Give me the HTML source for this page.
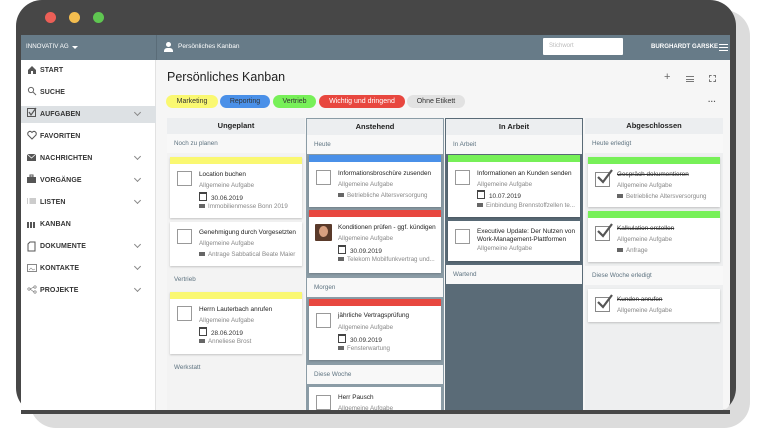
<!DOCTYPE html>
<html><head><meta charset="utf-8"><style>
*{margin:0;padding:0;box-sizing:border-box}
body{width:766px;height:430px;overflow:hidden;background:#fff;font-family:"Liberation Sans",sans-serif;position:relative}
.a{position:absolute}
.t{position:absolute;white-space:nowrap}
.nav{position:absolute;left:40px;font-size:7px;font-weight:bold;color:#333;letter-spacing:.1px;margin-top:1px}
.chev{position:absolute;left:135px;width:5px;height:5px;border-right:1px solid #888;border-bottom:1px solid #888;transform:rotate(45deg)}
.tag{position:absolute;top:95px;height:13px;border-radius:7px;font-size:7px;line-height:13px;text-align:center;color:#333}
.col{position:absolute;top:118px;width:138px;height:292px}
.hd{position:absolute;left:0;top:0;width:100%;height:16px;background:#eceef0;font-size:7.5px;font-weight:bold;text-align:center;line-height:16px;color:#222}
.sub{position:absolute;width:138px;height:19px;background:#f8f8f8;font-size:6.3px;color:#5e7380;line-height:19px;padding-left:7px}
.card{position:absolute;width:132px;background:#fff;box-shadow:0 1px 2px rgba(0,0,0,.2);overflow:hidden}
.bar{position:absolute;left:0;top:0;width:100%;height:7px}
.cb{position:absolute;left:7px;width:15px;height:15px;border:1px solid #999;background:#fff}
.ti{position:absolute;left:29px;font-size:6.4px;color:#222;white-space:nowrap}
.s1{position:absolute;left:29px;font-size:6.2px;color:#888;white-space:nowrap}
.dt{position:absolute;left:29px;font-size:6.4px;color:#333;white-space:nowrap}
.dt:before{content:"";display:inline-block;width:6px;height:6px;border:1px solid #444;border-top-width:2px;margin-right:4px;vertical-align:-1px}
.pr{position:absolute;left:29px;font-size:6.2px;color:#888;white-space:nowrap}
.pr:before{content:"";display:inline-block;width:6px;height:4px;background:#666;margin-right:3px;vertical-align:0}
.chk{position:absolute;left:7px;width:15px;height:15px;border:1px solid #888}
.chk svg{position:absolute;left:1px;top:-4px}
.st{text-decoration:line-through;color:#333}
</style></head><body>
<div class="a" style="left:30px;top:10px;width:720px;height:418px;background:#dcdcdc;border-radius:26px"></div>
<div class="a" style="left:16px;top:0;width:720px;height:414px;background:#474747;border-radius:26px"></div>
<div class="a" style="left:45px;top:12px;width:11px;height:11px;border-radius:50%;background:#ec5f57"></div>
<div class="a" style="left:69px;top:12px;width:11px;height:11px;border-radius:50%;background:#f4bd4f"></div>
<div class="a" style="left:93px;top:12px;width:11px;height:11px;border-radius:50%;background:#5fc651"></div>
<div class="a" style="left:21px;top:35px;width:709px;height:375px;background:#f6f6f6;border-radius:0 0 8px 8px;overflow:hidden"></div>
<div class="a" style="left:21px;top:35px;width:709px;height:25px;background:#677b88"></div>
<div class="t" style="left:26px;top:43px;font-size:6.2px;color:#fff">INNOVATIV AG</div>
<div class="a" style="left:72px;top:46px;border-left:3px solid transparent;border-right:3px solid transparent;border-top:3px solid #fff"></div>
<div class="a" style="left:156px;top:35px;width:1px;height:25px;background:#5a6c78"></div>
<div class="a" style="left:166px;top:42px;width:5px;height:5px;border-radius:50%;background:#fff"></div>
<div class="a" style="left:164px;top:48px;width:9px;height:4px;border-radius:3px 3px 0 0;background:#fff"></div>
<div class="t" style="left:178px;top:43px;font-size:6.5px;color:#fff">Persönliches Kanban</div>
<div class="a" style="left:543px;top:38px;width:80px;height:17px;background:#fff;border-radius:1px"></div>
<div class="t" style="left:549px;top:43px;font-size:6px;color:#bbb">Stichwort</div>
<div class="t" style="left:651px;top:43px;font-size:6.1px;color:#fff;font-weight:bold">BURGHARDT GARSKE</div>
<div class="a" style="left:719px;top:44px;width:9px;height:7px;border-top:1px solid #fff;border-bottom:1px solid #fff"></div>
<div class="a" style="left:719px;top:47px;width:9px;height:1px;background:#fff"></div>
<div class="a" style="left:21px;top:60px;width:135px;height:350px;background:#fff;border-right:1px solid #e2e2e2;border-radius:0 0 0 8px"></div>
<div class="a" style="left:21px;top:106px;width:135px;height:17px;background:#dde1e4"></div>
<svg class="a" style="left:27px;top:65px" width="10" height="140" viewBox="0 0 10 140">
<path d="M1 5 L5 1 L9 5 V9 H6 V6 H4 V9 H1Z" fill="#555"/>
<circle cx="4" cy="25" r="2.6" fill="none" stroke="#666" stroke-width="1"/><path d="M6 27 L9 30" stroke="#666"/>
<rect x="0.5" y="43.5" width="8" height="8" fill="none" stroke="#555"/><path d="M2 47 L4 50 L9 43" fill="none" stroke="#555" stroke-width="1.2"/>
<path d="M5 74 L1 70 C0 67 3 65 5 67.5 C7 65 10 67 9 70Z" fill="none" stroke="#555"/>
<rect x="0" y="89" width="9" height="7" fill="#555"/><path d="M0 89 L4.5 93 L9 89" stroke="#fff" fill="none" stroke-width=".8"/>
<rect x="0" y="112" width="9" height="6" fill="#555"/><rect x="3" y="110" width="3" height="2" fill="none" stroke="#555"/>
<path d="M0 134h1M0 136h1M0 138h1M2.5 134h6.5M2.5 136h6.5M2.5 138h6.5" stroke="#777" stroke-width=".8"/>
</svg>
<svg class="a" style="left:27px;top:219px" width="10" height="80" viewBox="0 0 10 80">
<path d="M0 3h2v6H0zM3 3h2v6H3zM6 3h2v6H6z" fill="#555"/>
<path d="M1 32 V25 L3 23 H8 V32Z" fill="none" stroke="#555"/>
<rect x="0.5" y="45.5" width="9" height="7" fill="none" stroke="#888"/><path d="M2 51 L4 49 L6 51 L8 50" stroke="#888" fill="none" stroke-width=".6"/>
<circle cx="2" cy="70" r="1.2" fill="none" stroke="#777" stroke-width=".7"/><circle cx="8" cy="68" r="1.2" fill="none" stroke="#777" stroke-width=".7"/><circle cx="8" cy="73" r="1.2" fill="none" stroke="#777" stroke-width=".7"/><path d="M3 70 L7 68 M3 70 L7 73" stroke="#777" stroke-width=".6"/>
</svg>
<div class="nav" style="top:66px">START</div>
<div class="nav" style="top:88px">SUCHE</div>
<div class="nav" style="top:110px">AUFGABEN</div><div class="chev" style="top:110px"></div>
<div class="nav" style="top:132px">FAVORITEN</div>
<div class="nav" style="top:154px">NACHRICHTEN</div><div class="chev" style="top:154px"></div>
<div class="nav" style="top:176px">VORGÄNGE</div><div class="chev" style="top:176px"></div>
<div class="nav" style="top:198px">LISTEN</div><div class="chev" style="top:198px"></div>
<div class="nav" style="top:220px">KANBAN</div>
<div class="nav" style="top:242px">DOKUMENTE</div><div class="chev" style="top:242px"></div>
<div class="nav" style="top:264px">KONTAKTE</div><div class="chev" style="top:264px"></div>
<div class="nav" style="top:286px">PROJEKTE</div><div class="chev" style="top:286px"></div>
<div class="t" style="left:167px;top:70px;font-size:12.5px;color:#222">Persönliches Kanban</div>
<div class="t" style="left:664px;top:71px;font-size:11px;color:#666">+</div>
<div class="a" style="left:686px;top:76px;width:8px;height:6px;border-top:1px solid #777;border-bottom:1px solid #777"></div>
<div class="a" style="left:686px;top:78.5px;width:8px;height:1px;background:#777"></div>
<div class="a" style="left:709px;top:75px;width:7px;height:7px;border:1px dashed #777"></div>
<div class="t" style="left:708px;top:97px;font-size:8px;color:#555;font-weight:bold">···</div>
<div class="tag" style="left:166px;width:52px;background:#faf871">Marketing</div>
<div class="tag" style="left:220px;width:50px;background:#4a90e8">Reporting</div>
<div class="tag" style="left:273px;width:43px;background:#77f058">Vertrieb</div>
<div class="tag" style="left:319px;width:86px;background:#e8473f;color:#fff">Wichtig und dringend</div>
<div class="tag" style="left:407px;width:58px;background:#e2e2e2">Ohne Etikett</div>

<div class="col" style="left:167px;background:#f3f3f3">
<div class="hd">Ungeplant</div>
<div class="sub" style="top:16px;left:0">Noch zu planen</div>
<div class="sub" style="top:152px;left:0;background:none">Vertrieb</div>
<div class="sub" style="top:240px;left:0;background:none">Werkstatt</div>
</div>
<div class="card" style="left:170px;top:157px;height:61px"><div class="bar" style="background:#faf871"></div>
<div class="cb" style="top:14px"></div><div class="ti" style="top:14px">Location buchen</div><div class="s1" style="top:25px">Allgemeine Aufgabe</div><div class="dt" style="top:35px">30.06.2019</div><div class="pr" style="top:46px">Immobilienmesse Bonn 2019</div></div>
<div class="card" style="left:170px;top:222px;height:44px">
<div class="cb" style="top:7px"></div><div class="ti" style="top:7px">Genehmigung durch Vorgesetzten</div><div class="s1" style="top:18px">Allgemeine Aufgabe</div><div class="pr" style="top:29px">Antrage Sabbatical Beate Maier</div></div>
<div class="card" style="left:170px;top:292px;height:62px"><div class="bar" style="background:#faf871"></div>
<div class="cb" style="top:14px"></div><div class="ti" style="top:14px">Herrn Lauterbach anrufen</div><div class="s1" style="top:25px">Allgemeine Aufgabe</div><div class="dt" style="top:35px">28.06.2019</div><div class="pr" style="top:46px">Anneliese Brost</div></div>

<div class="col" style="left:306px;background:#8b9ca6;border:1px solid #8b9ca6">
<div class="hd">Anstehend</div>
<div class="sub" style="top:16px;left:0;width:136px">Heute</div>
<div class="sub" style="top:159px;left:0;width:136px">Morgen</div>
<div class="sub" style="top:246px;left:0;width:136px">Diese Woche</div>
</div>
<div class="card" style="left:309px;top:155px;height:52px"><div class="bar" style="background:#4a90e8"></div>
<div class="cb" style="top:15px"></div><div class="ti" style="top:15px">Informationsbroschüre zusenden</div><div class="s1" style="top:26px">Allgemeine Aufgabe</div><div class="pr" style="top:37px">Betriebliche Altersversorgung</div></div>
<div class="card" style="left:309px;top:210px;height:63px"><div class="bar" style="background:#e8473f"></div>
<div class="a" style="left:6px;top:14px;width:17px;height:17px;background:#5a3a2a;border-radius:1px"></div><div class="a" style="left:10px;top:16px;width:9px;height:11px;border-radius:50%;background:#d8a080"></div>
<div class="ti" style="top:14px">Konditionen prüfen - ggf. kündigen</div><div class="s1" style="top:25px">Allgemeine Aufgabe</div><div class="dt" style="top:35px">30.09.2019</div><div class="pr" style="top:46px">Telekom Mobilfunkvertrag und...</div></div>
<div class="card" style="left:309px;top:299px;height:61px"><div class="bar" style="background:#e8473f"></div>
<div class="cb" style="top:14px"></div><div class="ti" style="top:13px">jährliche Vertragsprüfung</div><div class="s1" style="top:25px">Allgemeine Aufgabe</div><div class="dt" style="top:35px">30.09.2019</div><div class="pr" style="top:46px">Fensterwartung</div></div>
<div class="card" style="left:309px;top:387px;height:23px;box-shadow:none">
<div class="cb" style="top:8px"></div><div class="ti" style="top:7px">Herr Pausch</div><div class="s1" style="top:18px">Allgemeine Aufgabe</div></div>

<div class="col" style="left:445px;background:#5a6b77;border:1px solid #5a6b77">
<div class="hd">In Arbeit</div>
<div class="sub" style="top:16px;left:0;width:136px">In Arbeit</div>
<div class="sub" style="top:146px;left:0;width:136px">Wartend</div>
</div>
<div class="card" style="left:448px;top:155px;height:62px"><div class="bar" style="background:#77f058"></div>
<div class="cb" style="top:15px"></div><div class="ti" style="top:15px">Informationen an Kunden senden</div><div class="s1" style="top:26px">Allgemeine Aufgabe</div><div class="dt" style="top:35px">10.07.2019</div><div class="pr" style="top:47px">Einbindung Brennstoffzellen te...</div></div>
<div class="card" style="left:448px;top:221px;height:40px">
<div class="cb" style="top:8px"></div><div class="ti" style="top:7px;line-height:8px">Executive Update: Der Nutzen von<br>Work-Management-Plattformen</div><div class="s1" style="top:24px">Allgemeine Aufgabe</div></div>

<div class="col" style="left:585px;background:#eeeff0">
<div class="hd">Abgeschlossen</div>
<div class="sub" style="top:16px;left:0">Heute erledigt</div>
<div class="sub" style="top:148px;left:0">Diese Woche erledigt</div>
</div>
<div class="card" style="left:588px;top:157px;height:50px"><div class="bar" style="background:#77f058"></div>
<div class="chk" style="top:15px"><svg width="16" height="16"><path d="M1 8 L6 13 L15 1" fill="none" stroke="#555" stroke-width="2.2"/></svg></div>
<div class="ti st" style="top:14px">Gespräch dokumentieren</div><div class="s1" style="top:25px">Allgemeine Aufgabe</div><div class="pr" style="top:36px">Betriebliche Altersversorgung</div></div>
<div class="card" style="left:588px;top:211px;height:51px"><div class="bar" style="background:#77f058"></div>
<div class="chk" style="top:15px"><svg width="16" height="16"><path d="M1 8 L6 13 L15 1" fill="none" stroke="#555" stroke-width="2.2"/></svg></div>
<div class="ti st" style="top:14px">Kalkulation erstellen</div><div class="s1" style="top:25px">Allgemeine Aufgabe</div><div class="pr" style="top:36px">Anfrage</div></div>
<div class="card" style="left:588px;top:289px;height:33px">
<div class="chk" style="top:8px"><svg width="16" height="16"><path d="M1 8 L6 13 L15 1" fill="none" stroke="#555" stroke-width="2.2"/></svg></div>
<div class="ti st" style="top:7px">Kunden anrufen</div><div class="s1" style="top:18px">Allgemeine Aufgabe</div></div>
<div class="a" style="left:21px;top:410px;width:709px;height:4px;background:#474747"></div>
</body></html>
